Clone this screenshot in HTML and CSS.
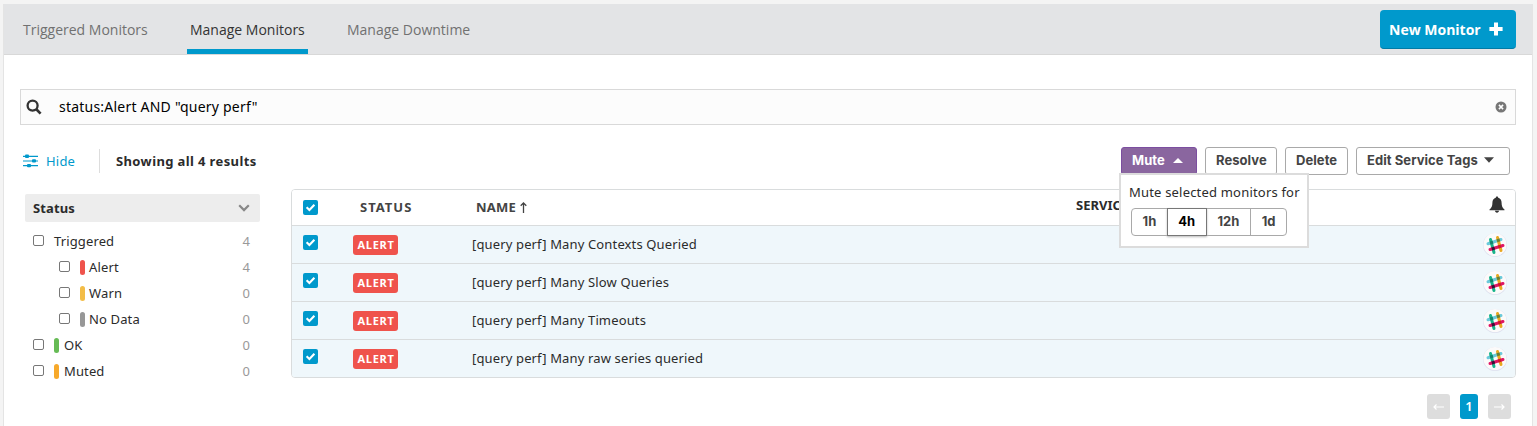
FILE: index.html
```
<!DOCTYPE html>
<html lang="en">
<head>
<meta charset="utf-8">
<title>Manage Monitors</title>
<link rel="stylesheet" href="styles.css">
</head>
<body>
<svg width="0" height="0" class="defs">
  <symbol id="check" viewBox="0 0 15 15"><path d="M3.6 7.3 6.4 10l5-5.3" fill="none" stroke="#fff" stroke-width="2.1"/></symbol>
  <symbol id="slack" viewBox="0 0 24 24">
    <circle cx="12" cy="12" r="12" fill="#dcdfee"/><circle cx="12" cy="11.6" r="11.6" fill="#fbfafa"/>
    <g stroke-width="3" stroke-linecap="round">
      <path d="M5 10.7 18 6.5" stroke="#6bcadb"/>
      <path d="M14.5 4.5 18 17.5" stroke="#e9a820"/>
      <path d="M7.5 6.5 11 19.5" stroke="#17b38a"/>
      <path d="M7 16.5 20 12.5" stroke="#e01563"/>
    </g>
    <g stroke-width="3"><path d="M7.2 10 10 9.1" stroke="#16836d"/><path d="M13.9 7.8 16.8 6.9" stroke="#66803a"/><path d="M8.8 16 11.7 15.1" stroke="#361238"/><path d="M15.2 14 18 13.1" stroke="#cc2027"/></g>
  </symbol>
</svg>
<div class="panel">
  <header class="tabs">
    <nav class="tab-list">
      <a class="tab t1">Triggered Monitors</a>
      <a class="tab active">Manage Monitors</a>
      <a class="tab t3">Manage Downtime</a>
    </nav>
    <button class="new-monitor"><span>New Monitor</span><svg width="14" height="14" viewBox="0 0 14 14"><path d="M7 .4v13.2M.4 7h13.2" stroke="#fff" stroke-width="4"/></svg></button>
  </header>
  <div class="search">
    <svg width="16" height="16" viewBox="0 0 16 16" fill="none" stroke="#333" stroke-width="2.3"><circle cx="6.6" cy="6.6" r="5"/><path d="m10.3 10.3 4.3 4.3" stroke-width="2.7"/></svg>
    <span class="query">status:Alert AND "query perf"</span>
    <svg class="clear" width="12" height="12" viewBox="0 0 12 12"><circle cx="6" cy="6" r="5.5" fill="#777"/><path d="m3.9 3.9 4.2 4.2m0-4.2L3.9 8.1" stroke="#fff" stroke-width="1.5"/></svg>
  </div>
  <div class="toolbar">
    <a class="hide"><svg width="15" height="14" viewBox="0 0 15 14" fill="#0099cc"><path d="M0 1.7h15v1.2H0zM0 6.4h15v1.2H0zM0 11h15v1.2H0z"/><rect x="2" y=".6" width="4" height="3.3" rx="1"/><rect x="9" y="5.3" width="4" height="3.3" rx="1"/><rect x="4" y="10" width="4" height="3.3" rx="1"/></svg><span>Hide</span></a>
    <strong class="results">Showing all 4 results</strong>
    <div class="actions">
      <div class="mute-wrap">
        <button class="btn mute"><span>Mute</span><svg width="10" height="5" viewBox="0 0 10 5"><path d="M0 5 5 0l5 5z" fill="#fff"/></svg></button>
        <div class="popup">
          <div class="popup-title">Mute selected monitors for</div>
          <div class="durations"><span>1h</span><span class="sel">4h</span><span>12h</span><span>1d</span></div>
        </div>
      </div>
      <button class="btn resolve"><span>Resolve</span></button>
      <button class="btn delete"><span>Delete</span></button>
      <button class="btn edit"><span>Edit Service Tags</span><svg width="10" height="6" viewBox="0 0 10 6"><path d="M0 .3h10L5 5.7z" fill="#444"/></svg></button>
    </div>
  </div>
  <main class="content">
    <aside class="facets">
      <div class="facet-head"><span>Status</span><svg width="12" height="8" viewBox="0 0 12 8"><path d="m1.2 1.3 4.8 4.8 4.8-4.8" fill="none" stroke="#888" stroke-width="2.2"/></svg></div>
      <div class="facet"><i class="box"></i><span class="name plain">Triggered</span><span class="count">4</span></div>
      <div class="facet sub"><i class="box"></i><i class="pill red"></i><span class="name">Alert</span><span class="count">4</span></div>
      <div class="facet sub"><i class="box"></i><i class="pill yellow"></i><span class="name">Warn</span><span class="count">0</span></div>
      <div class="facet sub"><i class="box"></i><i class="pill gray"></i><span class="name">No Data</span><span class="count">0</span></div>
      <div class="facet"><i class="box"></i><i class="pill green"></i><span class="name">OK</span><span class="count">0</span></div>
      <div class="facet"><i class="box"></i><i class="pill orange"></i><span class="name">Muted</span><span class="count">0</span></div>
    </aside>
    <section class="list">
      <div class="table">
        <div class="row head">
          <span class="cb"><svg width="15" height="15"><use href="#check"/></svg></span>
          <span class="h-status">STATUS</span>
          <span class="h-name">NAME <svg width="7" height="11" viewBox="0 0 7 11"><path d="M3.5 11V1M.7 3.8 3.5 1l2.8 2.8" fill="none" stroke="#444" stroke-width="1.3"/></svg></span>
          <span class="h-service">SERVICE</span>
          <svg class="bell" width="16" height="17" viewBox="0 0 16 17"><path d="M8 .4c.8 0 1.2.5 1.2 1.3 2.3.7 3.4 2.3 3.4 5 0 3.700.8 5 2.900 6.800v.8H.5v-.8c2.100-1.800 2.900-3.100 2.900-6.800 0-2.700 1.100-4.300 3.400-5C6.800.9 7.200.4 8 .4zM6 14.800h4c0 1.100-.8 1.900-2 1.900s-2-.8-2-1.900z" fill="#333"/></svg>
        </div>
        <div class="row"><span class="cb"><svg width="15" height="15"><use href="#check"/></svg></span><span class="badge">ALERT</span><span class="title">[query perf] Many Contexts Queried</span><svg class="slack" width="24" height="24"><use href="#slack"/></svg></div>
        <div class="row"><span class="cb"><svg width="15" height="15"><use href="#check"/></svg></span><span class="badge">ALERT</span><span class="title">[query perf] Many Slow Queries</span><svg class="slack" width="24" height="24"><use href="#slack"/></svg></div>
        <div class="row"><span class="cb"><svg width="15" height="15"><use href="#check"/></svg></span><span class="badge">ALERT</span><span class="title">[query perf] Many Timeouts</span><svg class="slack" width="24" height="24"><use href="#slack"/></svg></div>
        <div class="row"><span class="cb"><svg width="15" height="15"><use href="#check"/></svg></span><span class="badge">ALERT</span><span class="title">[query perf] Many raw series queried</span><svg class="slack" width="24" height="24"><use href="#slack"/></svg></div>
      </div>
      <div class="pager">
        <span class="page"><svg width="11" height="6" viewBox="0 0 11 6"><path d="M11 3H1M3.500.5 1 3l2.500 2.500" fill="none" stroke="#fff" stroke-width="1.200"/></svg></span>
        <span class="page current">1</span>
        <span class="page"><svg width="11" height="6" viewBox="0 0 11 6"><path d="M0 3h10M7.500.5 10 3 7.500 5.500" fill="none" stroke="#fff" stroke-width="1.200"/></svg></span>
      </div>
    </section>
  </main>
</div>
</body>
</html>
```
FILE: styles.css
```
* { box-sizing: border-box; }
body { margin: 0; padding: 4px 4px 0 3px; height: 426px; overflow: hidden; background: #f4f4f4; font: 13px/18px "Noto Sans", "Open Sans", sans-serif; color: #2b2b2b; }
button { font: inherit; margin: 0; }
svg { display: block; flex: none; }
.defs { position: absolute; }
.panel { height: 440px; background: #fff; border: solid #e4e4e4; border-width: 0 1px; }
.tabs { height: 51px; display: flex; justify-content: space-between; background: #e3e4e6; border-bottom: 1px solid #d8d8d8; padding-right: 16px; }
.tab-list { display: flex; font: 14px/20px "Open Sans", sans-serif; color: #717171; }
.tab { height: 50px; padding: 16px 0 0; white-space: nowrap; }
.t1 { margin-left: 19px; width: 164px; }
.active { width: 121px; padding-left: 3px; color: #333; font-weight: 500; border-bottom: 5px solid #0099cc; }
.t3 { padding-left: 39px; }
.new-monitor { width: 136px; height: 39px; margin-top: 6px; display: flex; align-items: center; gap: 8px; padding: 0 0 0 9px; color: #fff; background: #0099cc; border: 0; border-bottom: 1px solid #007ba6; border-radius: 4px; font: bold 14px "Open Sans", sans-serif; white-space: nowrap; }
.search { margin: 34px 16px 0; height: 36px; display: flex; align-items: center; border: 1px solid #d9d9d9; background: #fcfcfc; padding: 0 8px 0 5px; color: #000; font-size: 14px; }
.query { margin-left: 17px; flex: 1; letter-spacing: .22px; }
.toolbar { display: flex; margin: 22px 22px 0 19px; height: 28px; }
.hide { display: flex; align-items: center; gap: 8px; width: 77px; height: 24px; margin-top: 2px; color: #0099cc; border-right: 1px solid #ddd; letter-spacing: .2px; }
.results { margin: 5px 0 0 16px; letter-spacing: .38px; }
.actions { display: flex; gap: 8px; margin-left: auto; }
.mute-wrap { position: relative; }
.btn { height: 28px; display: flex; align-items: center; padding: 0 0 2px 10px; background: #fff; border: 1px solid #a9a9a9; border-radius: 3px; font: bold 13px Inter, sans-serif; letter-spacing: .06px; color: #444; white-space: nowrap; }
.mute { width: 76px; gap: 8px; background: #8a669f; border-color: #7c4ea0; color: #fff; }
.resolve { width: 72px; }
.delete { width: 63px; }
.edit { width: 154px; gap: 6px; }
.popup { position: absolute; z-index: 2; left: -2px; top: 26px; width: 190px; height: 75px; background: #fff; border: 2px solid #dcdcdc; padding: 8px 0 0 8px; }
.popup-title { white-space: nowrap; letter-spacing: .19px; }
.durations { display: flex; width: 156px; height: 28px; margin: 7px 0 0 2px; border: 1px solid #a9a9a9; border-radius: 4px; font: bold 13px/25px Inter, sans-serif; color: #444; }
.durations span { text-align: center; width: 35px; }
.durations .sel { width: 40px; margin: -1px 0; border: 1px solid #777; color: #000; box-shadow: 0 1px 2px #bbb; }
.durations span:nth-child(3) { width: 45px; border-right: 1px solid #a9a9a9; }
.content { display: flex; margin: 14px 16px 0 21px; }
.facets { width: 235px; margin: 5px 31px 0 0; letter-spacing: .13px; }
.facet-head { height: 28px; margin-bottom: 6px; display: flex; align-items: center; justify-content: space-between; padding: 0 10px 1px 8px; background: #ededed; border-radius: 2px; font-weight: bold; }
.facet { height: 26px; display: flex; align-items: center; padding: 0 10px 0 8px; }
.sub { padding-left: 34px; }
.box { width: 11px; height: 11px; border: 1px solid #777; border-radius: 2px; margin: 0 10px 1px 0; }
.pill { width: 5px; height: 15px; border-radius: 2.5px; margin-right: 5px; }
.sub .pill { margin-right: 4px; margin-left: 1px; }
.sub .box { margin-right: 9px; }
.name { flex: 1; }
.count { color: #999; }
.red { background: #ef534c; }
.yellow { background: #f3bd47; }
.gray { background: #979797; }
.green { background: #66bb55; }
.orange { background: #f7a92b; }
.list { flex: 1; }
.table { border: 1px solid #d9dcdd; border-radius: 4px; overflow: hidden; }
.row { height: 38px; display: flex; align-items: center; background: #eff7fb; border-bottom: 1px solid #d9dcdd; padding: 0 8px 0 11px; }
.row:last-child { border-bottom: 0; height: 37px; }
.head { height: 36px; background: #fff; font-weight: bold; color: #444; }
.cb { width: 15px; height: 15px; border-radius: 2px; background: #0099cc; margin-bottom: 5px; }
.head .cb { margin-bottom: 1px; }
.h-status { margin: 0 0 1px 42px; width: 116px; letter-spacing: 1px; }
.h-name { display: flex; align-items: center; gap: 4px; width: 600px; margin-bottom: 1px; letter-spacing: .2px; }
.h-service { margin-bottom: 5px; color: #2b2b2b; }
.bell { margin: 0 2px 7px auto; }
.badge { width: 45px; height: 20px; margin: 1px 0 0 35px; border-radius: 3px; background: #ef534c; color: #fff; text-align: center; font: bold 11px/20px "Open Sans", sans-serif; letter-spacing: .7px; padding-left: 1px; }
.title { margin: 0 0 2px 74px; letter-spacing: .14px; }
.slack { margin-left: auto; }
.pager { display: flex; gap: 10px; justify-content: flex-end; margin: 16px 5px 0 0; }
.page { display: flex; align-items: center; justify-content: center; width: 23px; height: 25px; border-radius: 3px; background: #ddd; }
.current { width: 18px; background: #0099cc; color: #fff; font-weight: 600; padding-bottom: 1px; }
```
